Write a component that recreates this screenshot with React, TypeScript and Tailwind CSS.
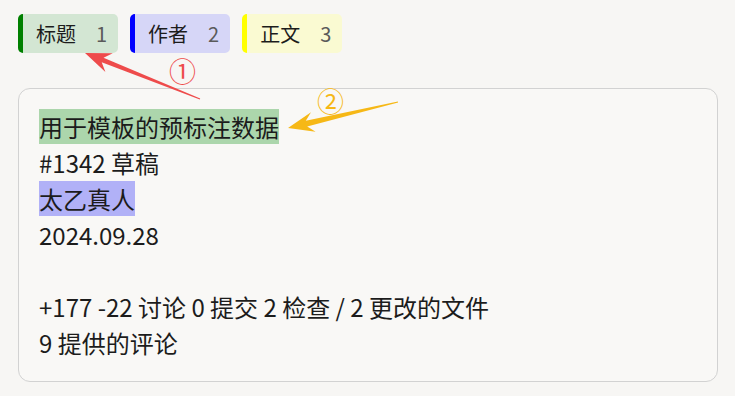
const tags = [
  { label: '标题', count: 1, bar: 'border-[#008000]', bg: 'bg-[#d3e6d3]' },
  { label: '作者', count: 2, bar: 'border-[#0000ff]', bg: 'bg-[#d6d6f7]' },
  { label: '正文', count: 3, bar: 'border-[#ffff00]', bg: 'bg-[#fafad2]' },
]

export default function App() {
  return (
    <div className="relative w-[735px] h-[396px] overflow-hidden bg-[#f7f6f4] pt-[14px] px-[18px] text-[#1c1c1c] font-['Noto_Sans_CJK_SC',sans-serif]">
      {/* label tags */}
      <div className="flex gap-3">
        {tags.map((t) => (
          <div
            key={t.label}
            className={`flex items-center h-[39px] rounded-[5px] border-l-[5px] pl-[13px] pr-[11px] ${t.bar} ${t.bg}`}
          >
            <span className="text-[20px] leading-none">{t.label}</span>
            <span className="ml-[20px] text-[20px] leading-none text-[#5a5a5a]">{t.count}</span>
          </div>
        ))}
      </div>

      {/* annotated document */}
      <div className="mt-[35px] w-[700px] rounded-[12px] border border-[#d2d2d2] bg-[#f9f8f6] px-[20px] py-[20px] text-[24px] leading-[36px]">
        <div>
          <span className="bg-[#acd6ac]">用于模板的预标注数据</span>
        </div>
        <div>#1342 草稿</div>
        <div>
          <span className="bg-[#b1b1f7]">太乙真人</span>
        </div>
        <div>2024.09.28</div>
        <div className="h-[36px]" />
        <div>+177 -22 讨论 0 提交 2 检查 / 2 更改的文件</div>
        <div>9 提供的评论</div>
      </div>

      {/* callouts */}
      <svg className="pointer-events-none absolute left-0 top-0" width="735" height="396" viewBox="0 0 735 396">
        <polygon
          fill="#ee4b4b"
          points="85,53 105.4,71.9 101.7,62.3 199.8,99.5 200.2,98.5 103.5,57.7 112.8,53.3"
        />
        <polygon
          fill="#f6b816"
          points="288,128 315.6,131.7 307.2,126.5 398.1,102.6 397.9,101.4 305.8,120.7 311,112.3"
        />
      </svg>
      <span className="absolute left-[169px] top-[56px] text-[27px] leading-[30px] text-[#ee4b4b]">①</span>
      <span className="absolute left-[317px] top-[86px] text-[27px] leading-[30px] text-[#f6b816]">②</span>
    </div>
  )
}
